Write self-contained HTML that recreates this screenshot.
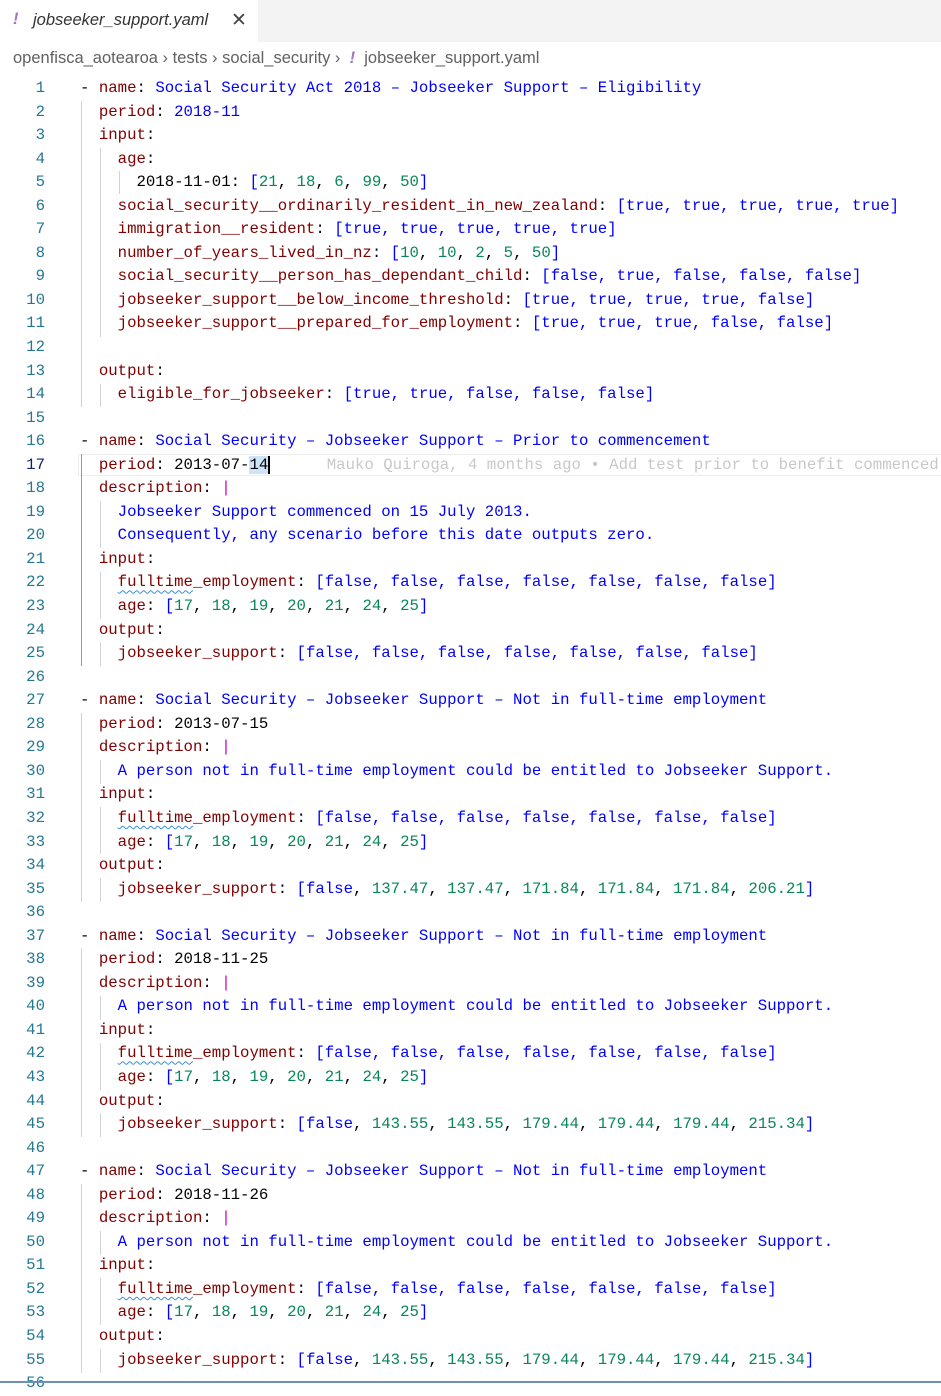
<!DOCTYPE html>
<html><head><meta charset="utf-8"><style>
body{margin:0;width:941px;height:1383px;background:#fff;overflow:hidden;position:relative;font-family:"Liberation Sans",sans-serif}
.tabbar{position:absolute;left:0;top:0;width:941px;height:42px;background:#f3f3f3}
.tab{position:absolute;left:0;top:0;width:258px;height:42px;background:#fff;font-size:16.5px;font-style:italic;color:#333}
.tab .ex{position:absolute;left:13px;top:10px;color:#a074c4;font-weight:bold}
.tab .nm{position:absolute;left:33px;top:11px}
.tab .x{position:absolute;left:231px;top:9px;font-style:normal;font-size:19px;color:#444}
.bc{position:absolute;left:13px;top:49px;font-size:16.5px;color:#616161;white-space:pre}
.bc .ex{color:#a074c4;font-style:italic;font-weight:bold}
.code{position:absolute;left:0;top:77px;width:941px}
.l{height:23.56px;line-height:23.56px;font-family:"Liberation Mono",monospace;font-size:15.7px;white-space:pre;position:relative}
.ln{position:absolute;left:0;width:45px;text-align:right;color:#237893}
.t{position:absolute;left:80px;color:#000}
.k{color:#800000}.s{color:#0000ff}.n{color:#098658}.b{color:#0000ff}.pi{color:#c800c8}
.g{position:absolute;width:1px;background:#d3d3d3}
.sq{text-decoration:underline wavy #3a8de0;text-decoration-thickness:1px;text-underline-offset:3px}
.cur{position:absolute;left:78px;top:454px;width:870px;height:22px;border:1px solid #eee;box-sizing:border-box}
</style></head><body>
<div class="tabbar"><div class="tab"><span class="ex">!</span><span class="nm">jobseeker_support.yaml</span><span class="x">✕</span></div></div>
<div class="bc">openfisca_aotearoa › tests › social_security ›  <span class="ex">!</span>  jobseeker_support.yaml</div>
<div class="cur"></div>
<div class="g" style="left:81px;top:101px;height:306px"></div>
<div class="g" style="left:100px;top:148px;height:189px"></div>
<div class="g" style="left:100px;top:384px;height:23px"></div>
<div class="g" style="left:119px;top:171px;height:23px"></div>
<div class="g" style="left:81px;top:454px;height:212px;background:#999"></div>
<div class="g" style="left:100px;top:501px;height:47px"></div>
<div class="g" style="left:100px;top:572px;height:47px"></div>
<div class="g" style="left:100px;top:642px;height:24px"></div>
<div class="g" style="left:81px;top:713px;height:189px"></div>
<div class="g" style="left:100px;top:760px;height:24px"></div>
<div class="g" style="left:100px;top:807px;height:47px"></div>
<div class="g" style="left:100px;top:878px;height:24px"></div>
<div class="g" style="left:81px;top:948px;height:189px"></div>
<div class="g" style="left:100px;top:996px;height:24px"></div>
<div class="g" style="left:100px;top:1043px;height:47px"></div>
<div class="g" style="left:100px;top:1113px;height:24px"></div>
<div class="g" style="left:81px;top:1184px;height:189px"></div>
<div class="g" style="left:100px;top:1231px;height:24px"></div>
<div class="g" style="left:100px;top:1278px;height:47px"></div>
<div class="g" style="left:100px;top:1349px;height:24px"></div>
<div class="code">
<div class="l"><span class="ln">1</span><span class="t">- <span class="k">name</span>: <span class="s">Social Security Act 2018 – Jobseeker Support – Eligibility</span></span></div>
<div class="l"><span class="ln">2</span><span class="t">  <span class="k">period</span>: <span class="s">2018-11</span></span></div>
<div class="l"><span class="ln">3</span><span class="t">  <span class="k">input</span>:</span></div>
<div class="l"><span class="ln">4</span><span class="t">    <span class="k">age</span>:</span></div>
<div class="l"><span class="ln">5</span><span class="t">      2018-11-01: <span class="b">[</span><span class="n">21</span>, <span class="n">18</span>, <span class="n">6</span>, <span class="n">99</span>, <span class="n">50</span><span class="b">]</span></span></div>
<div class="l"><span class="ln">6</span><span class="t">    <span class="k">social_security__ordinarily_resident_in_new_zealand</span>: <span class="b">[true, true, true, true, true]</span></span></div>
<div class="l"><span class="ln">7</span><span class="t">    <span class="k">immigration__resident</span>: <span class="b">[true, true, true, true, true]</span></span></div>
<div class="l"><span class="ln">8</span><span class="t">    <span class="k">number_of_years_lived_in_nz</span>: <span class="b">[</span><span class="n">10</span>, <span class="n">10</span>, <span class="n">2</span>, <span class="n">5</span>, <span class="n">50</span><span class="b">]</span></span></div>
<div class="l"><span class="ln">9</span><span class="t">    <span class="k">social_security__person_has_dependant_child</span>: <span class="b">[false, true, false, false, false]</span></span></div>
<div class="l"><span class="ln">10</span><span class="t">    <span class="k">jobseeker_support__below_income_threshold</span>: <span class="b">[true, true, true, true, false]</span></span></div>
<div class="l"><span class="ln">11</span><span class="t">    <span class="k">jobseeker_support__prepared_for_employment</span>: <span class="b">[true, true, true, false, false]</span></span></div>
<div class="l"><span class="ln">12</span></div>
<div class="l"><span class="ln">13</span><span class="t">  <span class="k">output</span>:</span></div>
<div class="l"><span class="ln">14</span><span class="t">    <span class="k">eligible_for_jobseeker</span>: <span class="b">[true, true, false, false, false]</span></span></div>
<div class="l"><span class="ln">15</span></div>
<div class="l"><span class="ln">16</span><span class="t">- <span class="k">name</span>: <span class="s">Social Security – Jobseeker Support – Prior to commencement</span></span></div>
<div class="l"><span class="ln" style="color:#0b216f">17</span><span class="t">  <span class="k">period</span>: 2013-07-<span style="background:#cfe4f8">14</span><span style="border-left:2px solid #000"></span>      <span style="color:#c8c8c8">Mauko Quiroga, 4 months ago • Add test prior to benefit commenced</span></span></div>
<div class="l"><span class="ln">18</span><span class="t">  <span class="k">description</span>: <span class="pi">|</span></span></div>
<div class="l"><span class="ln">19</span><span class="t">    <span class="s">Jobseeker Support commenced on 15 July 2013.</span></span></div>
<div class="l"><span class="ln">20</span><span class="t">    <span class="s">Consequently, any scenario before this date outputs zero.</span></span></div>
<div class="l"><span class="ln">21</span><span class="t">  <span class="k">input</span>:</span></div>
<div class="l"><span class="ln">22</span><span class="t">    <span class="k"><span class="sq">fulltime</span>_employment</span>: <span class="b">[false, false, false, false, false, false, false]</span></span></div>
<div class="l"><span class="ln">23</span><span class="t">    <span class="k">age</span>: <span class="b">[</span><span class="n">17</span>, <span class="n">18</span>, <span class="n">19</span>, <span class="n">20</span>, <span class="n">21</span>, <span class="n">24</span>, <span class="n">25</span><span class="b">]</span></span></div>
<div class="l"><span class="ln">24</span><span class="t">  <span class="k">output</span>:</span></div>
<div class="l"><span class="ln">25</span><span class="t">    <span class="k">jobseeker_support</span>: <span class="b">[false, false, false, false, false, false, false]</span></span></div>
<div class="l"><span class="ln">26</span></div>
<div class="l"><span class="ln">27</span><span class="t">- <span class="k">name</span>: <span class="s">Social Security – Jobseeker Support – Not in full-time employment</span></span></div>
<div class="l"><span class="ln">28</span><span class="t">  <span class="k">period</span>: 2013-07-15</span></div>
<div class="l"><span class="ln">29</span><span class="t">  <span class="k">description</span>: <span class="pi">|</span></span></div>
<div class="l"><span class="ln">30</span><span class="t">    <span class="s">A person not in full-time employment could be entitled to Jobseeker Support.</span></span></div>
<div class="l"><span class="ln">31</span><span class="t">  <span class="k">input</span>:</span></div>
<div class="l"><span class="ln">32</span><span class="t">    <span class="k"><span class="sq">fulltime</span>_employment</span>: <span class="b">[false, false, false, false, false, false, false]</span></span></div>
<div class="l"><span class="ln">33</span><span class="t">    <span class="k">age</span>: <span class="b">[</span><span class="n">17</span>, <span class="n">18</span>, <span class="n">19</span>, <span class="n">20</span>, <span class="n">21</span>, <span class="n">24</span>, <span class="n">25</span><span class="b">]</span></span></div>
<div class="l"><span class="ln">34</span><span class="t">  <span class="k">output</span>:</span></div>
<div class="l"><span class="ln">35</span><span class="t">    <span class="k">jobseeker_support</span>: <span class="b">[false</span>, <span class="n">137.47</span>, <span class="n">137.47</span>, <span class="n">171.84</span>, <span class="n">171.84</span>, <span class="n">171.84</span>, <span class="n">206.21</span><span class="b">]</span></span></div>
<div class="l"><span class="ln">36</span></div>
<div class="l"><span class="ln">37</span><span class="t">- <span class="k">name</span>: <span class="s">Social Security – Jobseeker Support – Not in full-time employment</span></span></div>
<div class="l"><span class="ln">38</span><span class="t">  <span class="k">period</span>: 2018-11-25</span></div>
<div class="l"><span class="ln">39</span><span class="t">  <span class="k">description</span>: <span class="pi">|</span></span></div>
<div class="l"><span class="ln">40</span><span class="t">    <span class="s">A person not in full-time employment could be entitled to Jobseeker Support.</span></span></div>
<div class="l"><span class="ln">41</span><span class="t">  <span class="k">input</span>:</span></div>
<div class="l"><span class="ln">42</span><span class="t">    <span class="k"><span class="sq">fulltime</span>_employment</span>: <span class="b">[false, false, false, false, false, false, false]</span></span></div>
<div class="l"><span class="ln">43</span><span class="t">    <span class="k">age</span>: <span class="b">[</span><span class="n">17</span>, <span class="n">18</span>, <span class="n">19</span>, <span class="n">20</span>, <span class="n">21</span>, <span class="n">24</span>, <span class="n">25</span><span class="b">]</span></span></div>
<div class="l"><span class="ln">44</span><span class="t">  <span class="k">output</span>:</span></div>
<div class="l"><span class="ln">45</span><span class="t">    <span class="k">jobseeker_support</span>: <span class="b">[false</span>, <span class="n">143.55</span>, <span class="n">143.55</span>, <span class="n">179.44</span>, <span class="n">179.44</span>, <span class="n">179.44</span>, <span class="n">215.34</span><span class="b">]</span></span></div>
<div class="l"><span class="ln">46</span></div>
<div class="l"><span class="ln">47</span><span class="t">- <span class="k">name</span>: <span class="s">Social Security – Jobseeker Support – Not in full-time employment</span></span></div>
<div class="l"><span class="ln">48</span><span class="t">  <span class="k">period</span>: 2018-11-26</span></div>
<div class="l"><span class="ln">49</span><span class="t">  <span class="k">description</span>: <span class="pi">|</span></span></div>
<div class="l"><span class="ln">50</span><span class="t">    <span class="s">A person not in full-time employment could be entitled to Jobseeker Support.</span></span></div>
<div class="l"><span class="ln">51</span><span class="t">  <span class="k">input</span>:</span></div>
<div class="l"><span class="ln">52</span><span class="t">    <span class="k"><span class="sq">fulltime</span>_employment</span>: <span class="b">[false, false, false, false, false, false, false]</span></span></div>
<div class="l"><span class="ln">53</span><span class="t">    <span class="k">age</span>: <span class="b">[</span><span class="n">17</span>, <span class="n">18</span>, <span class="n">19</span>, <span class="n">20</span>, <span class="n">21</span>, <span class="n">24</span>, <span class="n">25</span><span class="b">]</span></span></div>
<div class="l"><span class="ln">54</span><span class="t">  <span class="k">output</span>:</span></div>
<div class="l"><span class="ln">55</span><span class="t">    <span class="k">jobseeker_support</span>: <span class="b">[false</span>, <span class="n">143.55</span>, <span class="n">143.55</span>, <span class="n">179.44</span>, <span class="n">179.44</span>, <span class="n">179.44</span>, <span class="n">215.34</span><span class="b">]</span></span></div>
<div class="l"><span class="ln">56</span></div>
</div>
<div style="position:absolute;left:0;top:1381px;width:941px;height:2px;background:#6f8fb5"></div>
</body></html>
